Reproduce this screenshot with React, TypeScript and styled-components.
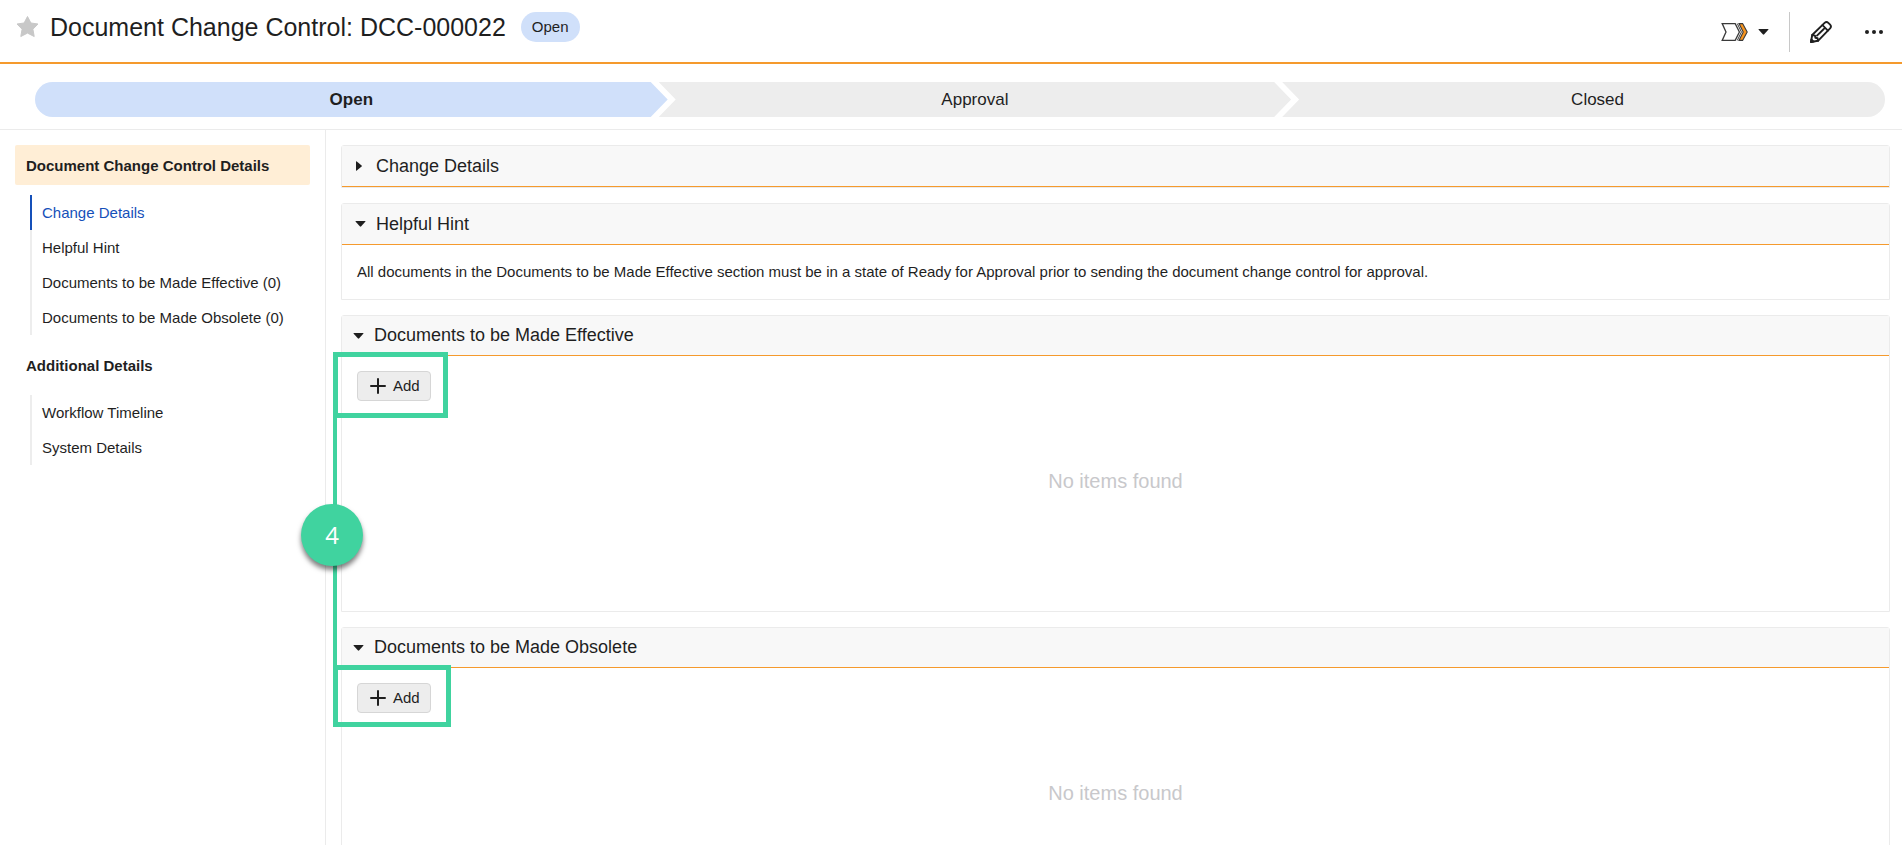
import React from 'react';
import styled, { createGlobalStyle, css } from 'styled-components';

const GlobalStyle = createGlobalStyle`
  *, *::before, *::after { box-sizing: border-box; }
  body {
    margin: 0;
    background: #fff;
    color: #1f1f1f;
    font-family: "Liberation Sans", Arial, Helvetica, sans-serif;
    font-size: 15px;
    line-height: 20px;
  }
  h1, h2, p, ul, ol { margin: 0; padding: 0; font-weight: 400; list-style: none; }
  button { font: inherit; color: inherit; cursor: pointer; }
`;

const Page = styled.div`
  display: flex;
  flex-direction: column;
  height: 100vh;
  overflow: hidden;
`;

const Header = styled.header`
  display: flex;
  align-items: flex-start;
  flex: none;
  padding: 12px 11px 10px 12px;
  border-bottom: 2px solid #f59a2d;
`;

const IconButton = styled.button`
  display: flex;
  align-items: center;
  justify-content: center;
  gap: 10px;
  padding: 0;
  border: 0;
  background: none;
`;

const FavoriteButton = styled(IconButton)`
  width: 30px;
  height: 30px;
  margin-right: 8px;
`;

const Title = styled.h1`
  font-size: 25px;
  line-height: 30px;
`;

const StatusBadge = styled.span`
  margin-left: 15px;
  padding: 0 11px;
  border-radius: 15px;
  background: #d0e0fa;
  line-height: 30px;
`;

const Actions = styled.div`
  display: flex;
  align-items: center;
  height: 40px;
  margin-left: auto;
`;

const Divider = styled.span`
  width: 1px;
  height: 40px;
  margin: 0 14px 0 20px;
  background: #c8c8c8;
`;

const ActionButton = styled(IconButton)`
  width: 34px;
  height: 40px;
`;

const MoreButton = styled(ActionButton)`
  margin-left: 19px;
`;

const Lifecycle = styled.ol`
  display: grid;
  flex: none;
  grid-template-columns: 342fr 337fr 321fr;
  padding: 18px 17px 12px 35px;
  border-bottom: 1px solid #ebebeb;
`;

type StepProps = { $place: 'first' | 'middle' | 'last'; $current?: boolean };

const stepShapes = {
  first: css`
    border-radius: 18px 0 0 18px;
    clip-path: polygon(0 0, calc(100% - 17px) 0, 100% 50%, calc(100% - 17px) 100%, 0 100%);
  `,
  middle: css`
    margin-left: -9px;
    clip-path: polygon(0 0, calc(100% - 17px) 0, 100% 50%, calc(100% - 17px) 100%, 0 100%, 17px 50%);
  `,
  last: css`
    margin-left: -9px;
    padding-left: 28px;
    border-radius: 0 18px 18px 0;
    clip-path: polygon(0 0, 100% 0, 100% 100%, 0 100%, 17px 50%);
  `,
};

const Step = styled.li<StepProps>`
  background: ${(p) => (p.$current ? '#d0e0fa' : '#ededed')};
  font-size: 17px;
  font-weight: ${(p) => (p.$current ? 700 : 400)};
  line-height: 35px;
  text-align: center;
  ${(p) => stepShapes[p.$place]}
`;

const Body = styled.div`
  position: relative;
  display: flex;
  flex: 1;
  min-height: 0;
`;

const Sidebar = styled.nav`
  flex: none;
  width: 326px;
  padding: 15px;
  border-right: 1px solid #ebebeb;
`;

const NavHeading = styled.h2<{ $active?: boolean }>`
  padding: 2px 11px 0;
  border-radius: 2px;
  background: ${(p) => (p.$active ? '#ffeed6' : 'transparent')};
  font-size: 15px;
  font-weight: 700;
  line-height: 38px;
`;

const NavList = styled.ul`
  margin: 10px 0 10px 15px;
`;

const NavLink = styled.a<{ $active?: boolean }>`
  display: block;
  padding-left: 10px;
  border-left: 2px solid ${(p) => (p.$active ? '#1550b9' : '#ededed')};
  color: ${(p) => (p.$active ? '#1550b9' : 'inherit')};
  line-height: 35px;
  text-decoration: none;
`;

const Main = styled.main`
  display: flex;
  flex: 1;
  flex-direction: column;
  gap: 15px;
  min-width: 0;
  padding: 15px 12px 15px 15px;
  overflow-y: auto;
  scrollbar-width: none;
`;

const Panel = styled.section`
  flex: none;
  border: 1px solid #ebebeb;
  border-radius: 3px 3px 0 0;
`;

const PanelHeading = styled.h2<{ $compact?: boolean }>`
  border-bottom: 1px solid #f59a2d;
  background: #f8f8f8;
  font-size: 18px;
  line-height: ${(p) => (p.$compact ? 39 : 40)}px;
  padding-left: ${(p) => (p.$compact ? 11 : 13)}px;
`;

const PanelToggle = styled.button`
  display: flex;
  align-items: center;
  gap: 10px;
  width: 100%;
  padding: 0;
  border: 0;
  background: none;
  text-align: left;
`;

const HintText = styled.p`
  padding: 17px 15px;
`;

const PanelBody = styled.div`
  height: 255px;
  padding: 15px;
`;

const AddButton = styled.button`
  display: flex;
  align-items: center;
  gap: 7px;
  height: 30px;
  padding: 0 10px 0 12px;
  border: 1px solid #d6d6d6;
  border-radius: 4px;
  background: #ededed;
`;

const EmptyMessage = styled.p`
  padding-top: 68px;
  color: #c8c8cb;
  font-size: 20px;
  line-height: 24px;
  text-align: center;
`;

const Callout = styled.div`
  position: absolute;
  top: 222px;
  left: 333px;
  display: flex;
  flex-direction: column;
  align-items: flex-start;
  pointer-events: none;
`;

const CalloutFrame = styled.div<{ $width: number; $height: number }>`
  width: ${(p) => p.$width}px;
  height: ${(p) => p.$height}px;
  border: 5px solid #40d39f;
`;

const CalloutLine = styled.div`
  display: flex;
  align-items: center;
  justify-content: center;
  width: 4px;
  height: 247px;
  padding-bottom: 13px;
  background: #40d39f;
`;

const CalloutNumber = styled.span`
  flex: none;
  width: 62px;
  height: 62px;
  margin-right: 6px;
  border-radius: 50%;
  background: #40d39f;
  box-shadow: 0 4px 5px rgba(0, 0, 0, 0.5);
  color: #fff;
  font-family: "Open Sans", "Noto Sans", sans-serif;
  font-size: 24px;
  line-height: 61px;
  text-align: center;
`;

const StarIcon = () => (
  <svg width="24" height="24" viewBox="0 0 24 24" aria-hidden="true">
    <path
      d="M12.500 1.500l3.400 6.500 7.100 1-5.100 5.200 1.300 7.300-6.700-3.400-6.700 3.400 1.300-7.300L2 9l7.100-1z"
      fill="#c8c8c8"
      stroke="#c8c8c8"
      strokeLinejoin="round"
    />
  </svg>
);

const WorkflowIcon = () => (
  <svg width="27" height="20" viewBox="0 0 27 20" fill="none" stroke="#3a3a3a" strokeWidth="1.300" aria-hidden="true">
    <path d="M1.200 1.600h13L18.400 10l-4.200 8.400h-13L5 10z" />
    <path d="M16.300 1.600L20.400 10l-4.100 8.400" strokeWidth="1" />
    <path d="M18 1.600h3.600L26.200 10l-4.600 8.400H18L22.200 10z" fill="#f7941e" strokeWidth="1.100" />
  </svg>
);

const CaretDown = () => (
  <svg width="11" height="6" viewBox="0 0 11 6" fill="#1f1f1f" aria-hidden="true">
    <path d="M1 0h9q1 0 .3.800L6.200 5.300q-.7.700-1.400 0L.7.800Q0 0 1 0z" />
  </svg>
);

const CaretRight = () => (
  <svg width="11" height="10" viewBox="0 0 11 10" fill="#1f1f1f" aria-hidden="true">
    <path d="M1 .8Q1 0 1.800.4L6.600 4.400q.6.600 0 1.200L1.800 9.600Q1 10 1 9.200z" />
  </svg>
);

const PencilIcon = () => (
  <svg
    width="24"
    height="24"
    viewBox="0 0 24 24"
    fill="none"
    stroke="#1f1f1f"
    strokeWidth="1.900"
    strokeLinejoin="round"
    strokeLinecap="round"
    aria-hidden="true"
  >
    <path d="M2 22l1.200-7L15.600 2.900q1.900-1.700 3.700 0l1.800 1.800q1.700 1.800 0 3.700L9 20.800z" />
    <path d="M13.500 5.200l5.400 5.400M3.200 15l2.800.6.400 2.200 2.200.4.400 2.600M8 15.600l6.800-6.600" />
    <path d="M2 22l.4-2.600L4.600 21.600z" fill="#1f1f1f" />
  </svg>
);

const DotsIcon = () => (
  <svg width="20" height="4" viewBox="0 0 20 4" fill="#1f1f1f" aria-hidden="true">
    <circle cx="3" cy="2" r="2" />
    <circle cx="10" cy="2" r="2" />
    <circle cx="17" cy="2" r="2" />
  </svg>
);

const PlusIcon = () => (
  <svg width="16" height="16" viewBox="0 0 16 16" stroke="#1f1f1f" strokeWidth="2" strokeLinecap="round" aria-hidden="true">
    <path d="M8 1v14M1 8h14" />
  </svg>
);

const DocumentPanel = ({ id, title }: { id: string; title: string }) => (
  <Panel id={id}>
    <PanelHeading $compact>
      <PanelToggle type="button" aria-expanded="true">
        <CaretDown />
        {title}
      </PanelToggle>
    </PanelHeading>
    <PanelBody>
      <AddButton type="button">
        <PlusIcon />
        Add
      </AddButton>
      <EmptyMessage>No items found</EmptyMessage>
    </PanelBody>
  </Panel>
);

export default function App() {
  return (
    <>
      <GlobalStyle />
      <Page>
        <Header>
          <FavoriteButton type="button" aria-label="Favorite">
            <StarIcon />
          </FavoriteButton>
          <Title>Document Change Control: DCC-000022</Title>
          <StatusBadge>Open</StatusBadge>
          <Actions>
            <IconButton type="button" aria-label="Workflow actions">
              <WorkflowIcon />
              <CaretDown />
            </IconButton>
            <Divider />
            <ActionButton type="button" aria-label="Edit">
              <PencilIcon />
            </ActionButton>
            <MoreButton type="button" aria-label="More actions">
              <DotsIcon />
            </MoreButton>
          </Actions>
        </Header>

        <Lifecycle>
          <Step $place="first" $current>Open</Step>
          <Step $place="middle">Approval</Step>
          <Step $place="last">Closed</Step>
        </Lifecycle>

        <Body>
          <Sidebar aria-label="Record sections">
            <NavHeading $active>Document Change Control Details</NavHeading>
            <NavList>
              <li><NavLink href="#change-details" $active>Change Details</NavLink></li>
              <li><NavLink href="#helpful-hint">Helpful Hint</NavLink></li>
              <li><NavLink href="#made-effective">Documents to be Made Effective (0)</NavLink></li>
              <li><NavLink href="#made-obsolete">Documents to be Made Obsolete (0)</NavLink></li>
            </NavList>
            <NavHeading>Additional Details</NavHeading>
            <NavList>
              <li><NavLink href="#workflow-timeline">Workflow Timeline</NavLink></li>
              <li><NavLink href="#system-details">System Details</NavLink></li>
            </NavList>
          </Sidebar>

          <Main>
            <Panel id="change-details">
              <PanelHeading>
                <PanelToggle type="button" aria-expanded="false">
                  <CaretRight />
                  Change Details
                </PanelToggle>
              </PanelHeading>
            </Panel>
            <Panel id="helpful-hint">
              <PanelHeading>
                <PanelToggle type="button" aria-expanded="true">
                  <CaretDown />
                  Helpful Hint
                </PanelToggle>
              </PanelHeading>
              <HintText>
                All documents in the Documents to be Made Effective section must be in a state of Ready for
                Approval prior to sending the document change control for approval.
              </HintText>
            </Panel>
            <DocumentPanel id="made-effective" title="Documents to be Made Effective" />
            <DocumentPanel id="made-obsolete" title="Documents to be Made Obsolete" />
          </Main>

          <Callout>
            <CalloutFrame $width={115} $height={66} />
            <CalloutLine>
              <CalloutNumber>4</CalloutNumber>
            </CalloutLine>
            <CalloutFrame $width={118} $height={62} />
          </Callout>
        </Body>
      </Page>
    </>
  );
}
